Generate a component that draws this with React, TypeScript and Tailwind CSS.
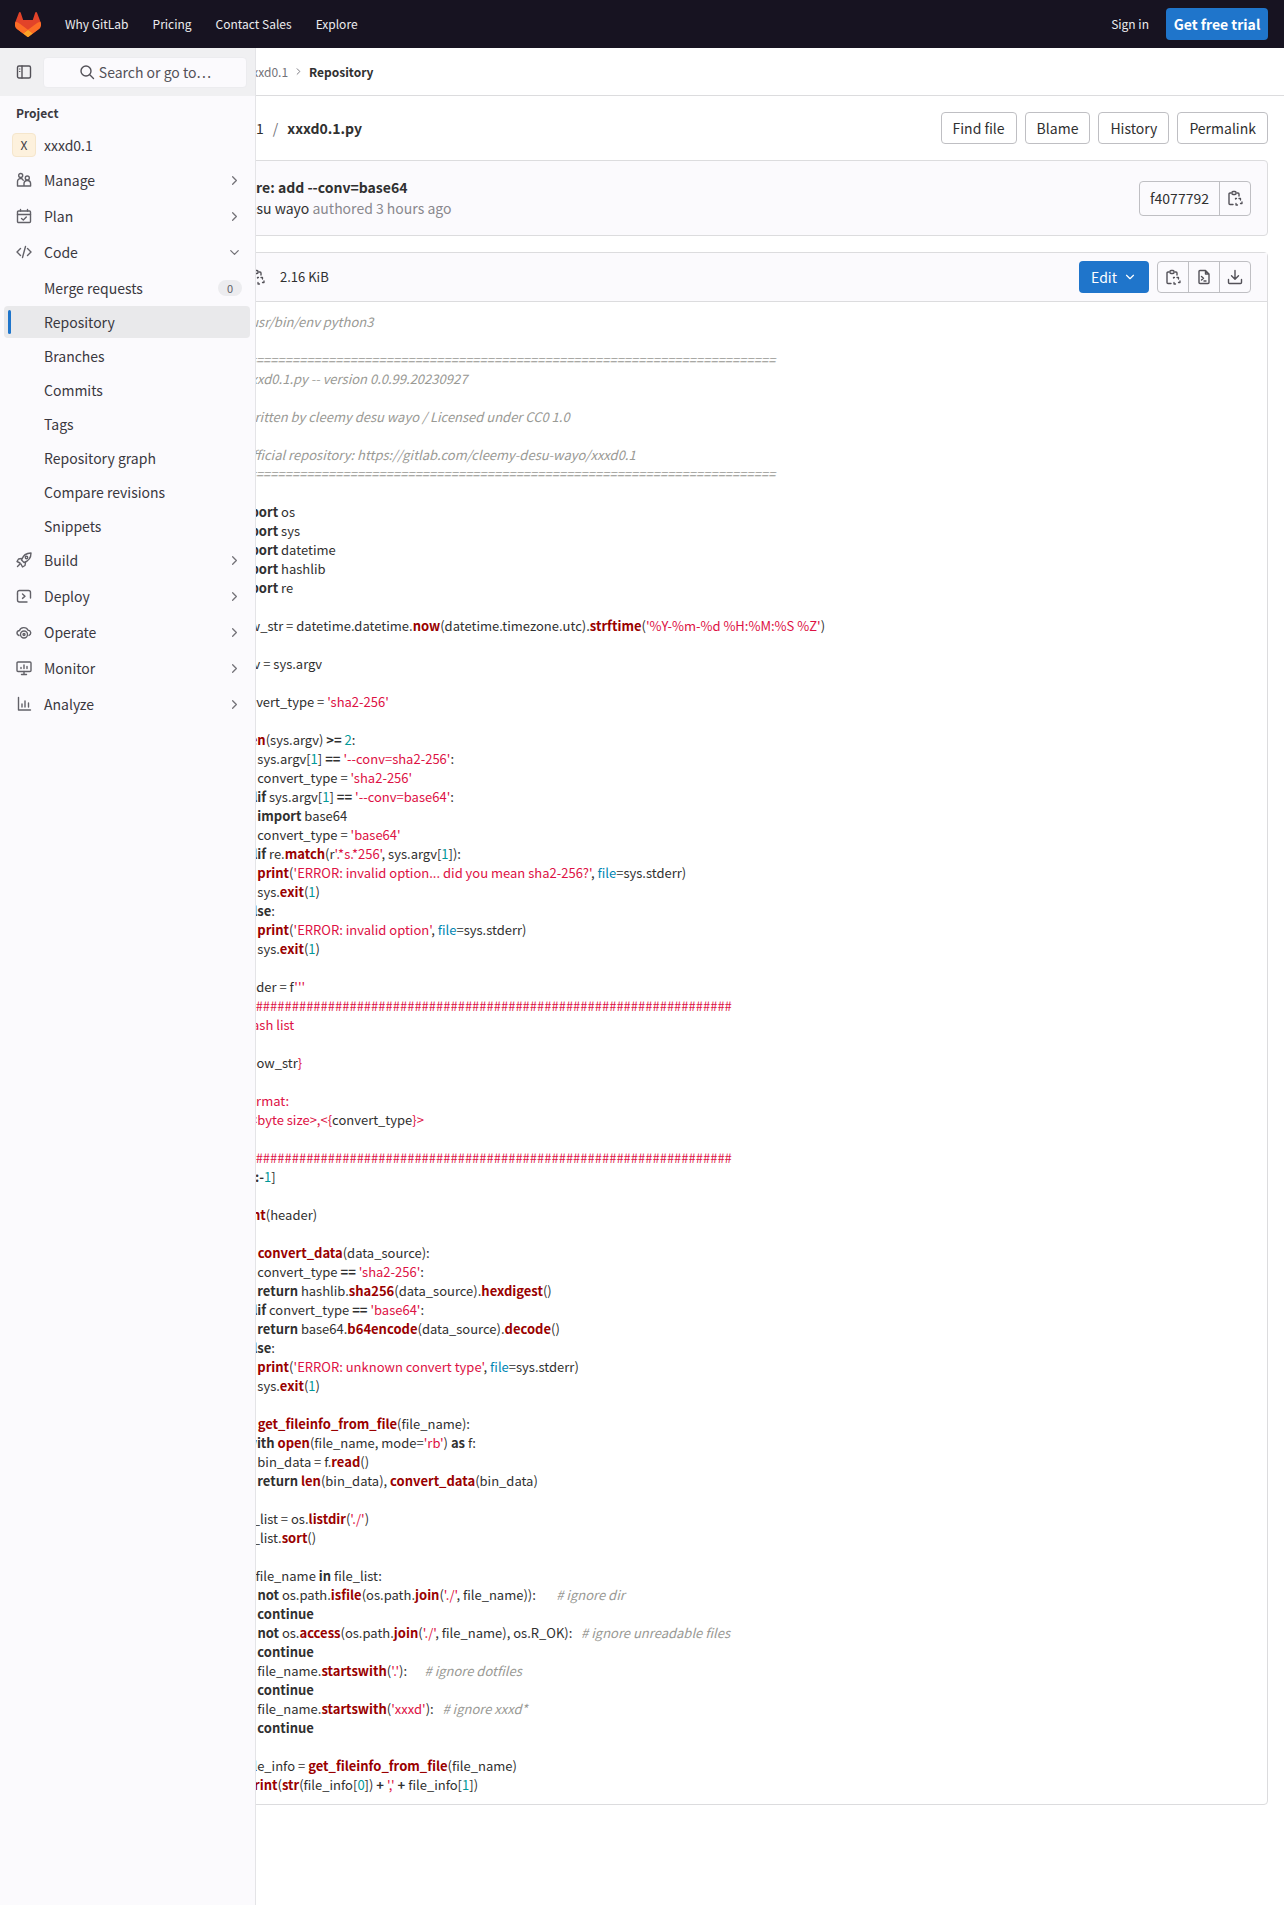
import React from 'react';
import { ChevronRight, ChevronDown } from 'lucide-react';

// code lines, ~x...~ marks a highlighted token, x is the token kind
const codeLines: string[] = [
  "~c#!/usr/bin/env python3~",
  "",
  "~c#==========================================================================~",
  "~c# xxxd0.1.py -- version 0.0.99.20230927~",
  "",
  "~c# written by cleemy desu wayo / Licensed under CC0 1.0~",
  "",
  "~c# official repository: https://gitlab.com/cleemy-desu-wayo/xxxd0.1~",
  "~c#==========================================================================~",
  "",
  "~kimport~ os",
  "~kimport~ sys",
  "~kimport~ datetime",
  "~kimport~ hashlib",
  "~kimport~ re",
  "",
  "now_str = datetime.datetime.~fnow~(datetime.timezone.utc).~fstrftime~(~s'%Y-%m-%d %H:%M:%S %Z'~)",
  "",
  "argv = sys.argv",
  "",
  "convert_type = ~s'sha2-256'~",
  "",
  "~kif~ ~flen~(sys.argv) ~k>=~ ~n2~:",
  "    ~kif~ sys.argv[~n1~] ~k==~ ~s'--conv=sha2-256'~:",
  "        convert_type = ~s'sha2-256'~",
  "    ~kelif~ sys.argv[~n1~] ~k==~ ~s'--conv=base64'~:",
  "        ~kimport~ base64",
  "        convert_type = ~s'base64'~",
  "    ~kelif~ re.~fmatch~(r~s'.*s.*256'~, sys.argv[~n1~]):",
  "        ~fprint~(~s'ERROR: invalid option... did you mean sha2-256?'~, ~bfile~=sys.stderr)",
  "        sys.~fexit~(~n1~)",
  "    ~kelse~:",
  "        ~fprint~(~s'ERROR: invalid option'~, ~bfile~=sys.stderr)",
  "        sys.~fexit~(~n1~)",
  "",
  "header = f~s'''~",
  "~s#####################################################################~",
  "~s# hash list~",
  "~s#~",
  "~s# ~{now_str~s}~",
  "~s#~",
  "~s# format:~",
  "~s#   <byte size>,<{~convert_type~s}>~",
  "~s#~",
  "~s#####################################################################~",
  "~s'''~  [~k:-~~n1~]",
  "",
  "~fprint~(header)",
  "",
  "~kdef~ ~fconvert_data~(data_source):",
  "    ~kif~ convert_type ~k==~ ~s'sha2-256'~:",
  "        ~kreturn~ hashlib.~fsha256~(data_source).~fhexdigest~()",
  "    ~kelif~ convert_type ~k==~ ~s'base64'~:",
  "        ~kreturn~ base64.~fb64encode~(data_source).~fdecode~()",
  "    ~kelse~:",
  "        ~fprint~(~s'ERROR: unknown convert type'~, ~bfile~=sys.stderr)",
  "        sys.~fexit~(~n1~)",
  "",
  "~kdef~ ~fget_fileinfo_from_file~(file_name):",
  "    ~kwith~ ~fopen~(file_name, mode=~s'rb'~) ~kas~ f:",
  "        bin_data = f.~fread~()",
  "        ~kreturn~ ~flen~(bin_data), ~fconvert_data~(bin_data)",
  "",
  "file_list = os.~flistdir~(~s'./'~)",
  "file_list.~fsort~()",
  "",
  "~kfor~ file_name ~kin~ file_list:",
  "    ~kif~ ~knot~ os.path.~fisfile~(os.path.~fjoin~(~s'./'~, file_name)):       ~c# ignore dir~",
  "        ~kcontinue~",
  "    ~kif~ ~knot~ os.~faccess~(os.path.~fjoin~(~s'./'~, file_name), os.R_OK):   ~c# ignore unreadable files~",
  "        ~kcontinue~",
  "    ~kif~ file_name.~fstartswith~(~s'.'~):      ~c# ignore dotfiles~",
  "        ~kcontinue~",
  "    ~kif~ file_name.~fstartswith~(~s'xxxd'~):   ~c# ignore xxxd*~",
  "        ~kcontinue~",
  "",
  "    file_info = ~fget_fileinfo_from_file~(file_name)",
  "    ~fprint~(~fstr~(file_info[~n0~]) ~k+~ ~s','~ ~k+~ file_info[~n1~])",
];

const tokenClass: Record<string, string> = {
  c: 'italic text-[#999994]',
  k: 'font-bold',
  f: 'font-bold text-[#990000]',
  s: 'text-[#dd1144]',
  n: 'text-[#009999]',
  b: 'text-[#0086b3]',
};

const CodeLine = ({ text }: { text: string }) => (
  <div className="h-[19px] whitespace-pre">
    {text.split('~').map((part, i) => {
      if (i % 2 === 0) return <span key={i}>{part}</span>;
      return (
        <span key={i} className={tokenClass[part[0]]}>
          {part.slice(1)}
        </span>
      );
    })}
  </div>
);

type IconProps = { className?: string };

const Svg = ({ className, children }: IconProps & { children: React.ReactNode }) => (
  <svg
    viewBox="0 0 16 16"
    fill="none"
    stroke="currentColor"
    strokeWidth="1.4"
    strokeLinecap="round"
    strokeLinejoin="round"
    className={className ?? 'w-4 h-4'}
  >
    {children}
  </svg>
);

const GitLabLogo = () => (
  <svg viewBox="0 0 25 24" className="w-[26px] h-[25px]">
    <path d="m24.507 9.5-.034-.09L21.082.562a.896.896 0 0 0-1.694.091l-2.29 7.01H7.825L5.535.653a.898.898 0 0 0-1.694-.09L.451 9.411.416 9.5a6.297 6.297 0 0 0 2.09 7.278l.012.01.03.022 5.16 3.867 2.56 1.935 1.554 1.176a1.051 1.051 0 0 0 1.268 0l1.555-1.176 2.56-1.935 5.197-3.89.014-.01A6.297 6.297 0 0 0 24.507 9.5Z" fill="#E24329" />
    <path d="m24.507 9.5-.034-.09a11.44 11.44 0 0 0-4.56 2.051l-7.447 5.632 4.742 3.584 5.197-3.89.014-.01A6.297 6.297 0 0 0 24.507 9.5Z" fill="#FC6D26" />
    <path d="m7.707 20.677 2.56 1.935 1.555 1.176a1.051 1.051 0 0 0 1.268 0l1.555-1.176 2.56-1.935-4.743-3.584-4.755 3.584Z" fill="#FCA326" />
    <path d="M5.01 11.461a11.43 11.43 0 0 0-4.56-2.05L.416 9.5a6.297 6.297 0 0 0 2.09 7.278l.012.01.03.022 5.16 3.867 4.745-3.584-7.444-5.632Z" fill="#FC6D26" />
  </svg>
);

const SidebarToggleIcon = () => (
  <Svg>
    <rect x="1.5" y="2" width="13" height="12" rx="1.5" />
    <path d="M6 2v12" />
    <path d="M3.5 5h.5M3.5 7.5h.5" strokeWidth="1" />
  </Svg>
);

const SearchIcon = () => (
  <Svg>
    <circle cx="7" cy="7" r="5" />
    <path d="m11 11 3.5 3.5" />
  </Svg>
);

const ManageIcon = () => (
  <Svg>
    <circle cx="4.7" cy="3.5" r="2" />
    <circle cx="11.3" cy="6" r="2" />
    <path d="M1.5 14V9.5a3 3 0 0 1 5.7-1.2M8 14v-2.2a3.3 3.3 0 0 1 6.6 0V14zM1.5 14H8" />
  </Svg>
);

const PlanIcon = () => (
  <Svg>
    <rect x="1.5" y="3" width="13" height="11.5" rx="1" />
    <path d="M1.5 6.5h13M4.5 1.5V3M11.5 1.5V3" />
    <path d="m5.5 10.5 1.8 1.5 3-3" />
  </Svg>
);

const CodeIcon = () => (
  <Svg>
    <path d="m4.5 4.5-3.5 3.5 3.5 3.5M11.5 4.5l3.5 3.5-3.5 3.5M9.5 2.5l-3 11" />
  </Svg>
);

const RocketIcon = () => (
  <Svg>
    <path d="M15 1c-5 0-8 2.500-9.500 7l2.500 2.500c4.500-1.500 7-4.500 7-9.500Z" />
    <circle cx="10.500" cy="5.500" r="1.200" />
    <path d="M5.500 6.500 2.500 7 1 9.500l3 1.500M9.500 10.500 9 13.500 6.500 15 5 12M4 12l-2.500 2.500" />
  </Svg>
);

const DeployIcon = () => (
  <Svg>
    <path d="M4 2.500h8.500a2 2 0 0 1 2 2V10M1.500 6v6a2 2 0 0 0 2 2H11" />
    <path d="m6.500 6 2.500 2.200-2.500 2.200" />
    <path d="M1.500 6V4.500a2 2 0 0 1 2-2" />
  </Svg>
);

const OperateIcon = () => (
  <Svg>
    <path d="M3 11.500c-3.200-1-2.200-5 .5-5C4.500 3 10.500 2.500 12 6.300c3-.1 3.700 3.700 1 5.200" />
    <circle cx="8" cy="10.500" r="3.500" />
    <circle cx="8" cy="10.500" r="1" />
  </Svg>
);

const MonitorIcon = () => (
  <Svg>
    <rect x="1" y="2" width="14" height="9.500" rx="1" />
    <path d="M5.500 14.500h5M8 11.500v3M5 8.500v-1M8 8.500v-3.500M11 8.500v-2" />
  </Svg>
);

const AnalyzeIcon = () => (
  <Svg>
    <path d="M2.500 1.500v12.500h12M6 11V8M9 11V5M12.500 11V7" />
  </Svg>
);

const CopyIcon = () => (
  <Svg className="w-4 h-4">
    <path d="M4 3H3a1 1 0 0 0-1 1v9.500a1 1 0 0 0 1 1h3M10 3h1a1 1 0 0 1 1 1v2" />
    <rect x="5" y="1.500" width="4" height="3" rx="1" />
    <path d="M8.500 9V8.500h1M12 8.500h1.500V10M15 12v1.500h-1.500M10.500 15H9v-1.500" strokeWidth="1.3" />
  </Svg>
);

const TerminalFileIcon = () => (
  <Svg>
    <path d="M9.500 1.500H4a1 1 0 0 0-1 1v11a1 1 0 0 0 1 1h8a1 1 0 0 0 1-1V5zM9.500 1.500V5H13" />
    <path d="m5.500 7.500 2 1.800-2 1.800M8 12h2" />
  </Svg>
);

const DownloadIcon = () => (
  <Svg>
    <path d="M8 1.500V10M4.500 6.800 8 10.300l3.500-3.500M1.500 10.500v3a1 1 0 0 0 1 1h11a1 1 0 0 0 1-1v-3" />
  </Svg>
);

interface NavRow {
  name: string;
  icon?: React.ReactNode;
  open?: boolean;
  active?: boolean;
  count?: string;
  parent?: boolean;
  spacing?: string;
}

const navRows: NavRow[] = [
  { name: 'Manage', icon: <ManageIcon />, parent: true },
  { name: 'Plan', icon: <PlanIcon />, parent: true },
  { name: 'Code', icon: <CodeIcon />, parent: true, open: true },
  { name: 'Merge requests', count: '0', spacing: 'mt-px' },
  { name: 'Repository', active: true },
  { name: 'Branches' },
  { name: 'Commits' },
  { name: 'Tags' },
  { name: 'Repository graph' },
  { name: 'Compare revisions' },
  { name: 'Snippets', spacing: '-mb-px' },
  { name: 'Build', icon: <RocketIcon />, parent: true },
  { name: 'Deploy', icon: <DeployIcon />, parent: true },
  { name: 'Operate', icon: <OperateIcon />, parent: true },
  { name: 'Monitor', icon: <MonitorIcon />, parent: true },
  { name: 'Analyze', icon: <AnalyzeIcon />, parent: true },
];

const Sidebar = () => (
  <aside className="absolute top-12 left-0 bottom-0 w-[256px] bg-[#fbfafd] border-r border-[#e4e4e7] text-[#3a383f]">
    <div className="h-12 bg-[#f0f0f2] flex items-center gap-[11px] pl-[16px] pr-2">
      <span className="text-[#535158]">
        <SidebarToggleIcon />
      </span>
      <div className="w-[204px] h-[31px] bg-[#fbfafd] border border-[#ececef] rounded flex items-center justify-center gap-1 text-[14px] text-[#535158]">
        <SearchIcon />
        <span>Search or go to…</span>
      </div>
    </div>
    <div className="pt-[6px]">
      <div className="h-[20px] mt-[1px] pl-4 flex items-center text-[12px] font-bold">Project</div>
      <div className="h-[34px] mt-[5px] pl-3 flex items-center gap-2 text-[14px]">
        <span className="w-6 h-6 rounded bg-[#fdf1dd] border border-[#f5e6cc] flex items-center justify-center text-[12px]">X</span>
        <span>xxxd0.1</span>
      </div>
      <div className="flex flex-col gap-[2px] pt-px">
        {navRows.map((row) => (
          <div
            key={row.name}
            className={`relative flex items-center text-[14px] ml-1 mr-[5px] pl-[12px] pr-[8px] rounded ${row.parent ? 'h-[34px]' : 'h-8'} ${row.active ? 'bg-[#e9e9eb]' : ''} ${row.spacing ?? ''}`}
          >
            {row.active && <span className="absolute left-1 top-1 bottom-1 w-[3px] rounded bg-[#1f75cb]" />}
            <span className="w-4 h-4 text-[#626168] shrink-0">{row.icon}</span>
            <span className="ml-3 flex-1">{row.name}</span>
            {row.count && (
              <span className="w-[24px] h-[16px] rounded-full bg-[#ececef] text-[#626168] text-[11px] flex items-center justify-center">{row.count}</span>
            )}
            {row.parent && (
              row.open
                ? <ChevronDown size={15} className="text-[#737278]" />
                : <ChevronRight size={15} className="text-[#737278]" />
            )}
          </div>
        ))}
      </div>
    </div>
  </aside>
);

const OutlineButton = ({ label }: { label: string }) => (
  <a className="h-8 px-[11px] flex items-center border border-[#bfbfc3] rounded text-[14px] text-[#303030]">{label}</a>
);

const IconButton = ({ children, last }: { children: React.ReactNode; last?: boolean }) => (
  <span className={`h-[30px] flex items-center justify-center text-[#535158] ${last ? 'w-[30px]' : 'w-[31px] border-r border-[#bfbfc3]'}`}>{children}</span>
);

const App: React.FC = () => {
  return (
    <div className="relative min-h-[1905px] bg-white font-['Noto_Sans_CJK_JP','Noto_Sans',sans-serif] text-[#303030]">
      <header className="h-12 bg-[#171321] flex items-center pl-[15px] pr-4 text-[14px] text-[#ececef]">
        <GitLabLogo />
        <nav className="flex items-center ml-6 gap-6 text-[12px]">
          <a>Why GitLab</a>
          <a>Pricing</a>
          <a>Contact Sales</a>
          <a>Explore</a>
        </nav>
        <div className="ml-auto flex items-center gap-[17px]">
          <a className="text-[12px]">Sign in</a>
          <a className="h-8 w-[102px] bg-[#1f75cb] rounded flex items-center justify-center font-bold text-white">Get free trial</a>
        </div>
      </header>

      <Sidebar />

      <div className="h-12 border-b border-[#dcdcde] pl-[123px] flex items-center text-[12px] text-[#737278]">
        <span>cleemy desu wayo</span>
        <ChevronRight size={11} className="mx-[5px]" />
        <span>xxxd0.1</span>
        <ChevronRight size={11} className="mx-[5px]" />
        <span className="font-bold text-[#303030]">Repository</span>
      </div>

      <main className="pl-4 pr-4">
        <div className="h-[64px] pt-4 flex items-start">
          <div className="h-8 flex items-center pl-[199px] text-[14px]">
            <span>xxxd0.1</span>
            <span className="mx-[9px] text-[#737278]">/</span>
            <span className="font-bold">xxxd0.1.py</span>
          </div>
          <div className="ml-auto flex gap-2">
            <OutlineButton label="Find file" />
            <OutlineButton label="Blame" />
            <OutlineButton label="History" />
            <OutlineButton label="Permalink" />
          </div>
        </div>

        <div className="h-[76px] border border-[#dcdcde] rounded bg-[#fbfafd] flex items-center pl-[173px] pr-4">
          <div className="text-[14px] leading-[21px]">
            <div className="font-bold ml-[41px]">chore: add --conv=base64</div>
            <div>cleemy desu wayo <span className="text-[#89888d]">authored 3 hours ago</span></div>
          </div>
          <div className="ml-auto h-[35px] flex border border-[#bfbfc3] rounded text-[14px]">
            <span className="w-[80px] flex items-center justify-center border-r border-[#bfbfc3]">f4077792</span>
            <span className="w-[30px] flex items-center justify-center text-[#535158]">
              <CopyIcon />
            </span>
          </div>
        </div>

        <div className="mt-4 border border-[#dcdcde] rounded">
          <div className="h-[49px] bg-[#fbfafd] border-b border-[#dcdcde] flex items-center pl-[232px] pr-4">
            <span className="text-[#535158]"><CopyIcon /></span>
            <span className="ml-[15px] text-[13px]">2.16 KiB</span>
            <a className="ml-auto h-8 w-[70px] rounded bg-[#1f75cb] text-white text-[14px] flex items-center justify-center gap-[6px]">
              Edit
              <ChevronDown size={14} />
            </a>
            <div className="ml-2 flex border border-[#bfbfc3] rounded">
              <IconButton><CopyIcon /></IconButton>
              <IconButton><TerminalFileIcon /></IconButton>
              <IconButton last><DownloadIcon /></IconButton>
            </div>
          </div>
          <div className="py-[10px] pl-[217px] text-[13px] leading-[19px]">
            {codeLines.map((line, i) => (
              <CodeLine key={i} text={line} />
            ))}
          </div>
        </div>
      </main>
    </div>
  );
};

export default App;
